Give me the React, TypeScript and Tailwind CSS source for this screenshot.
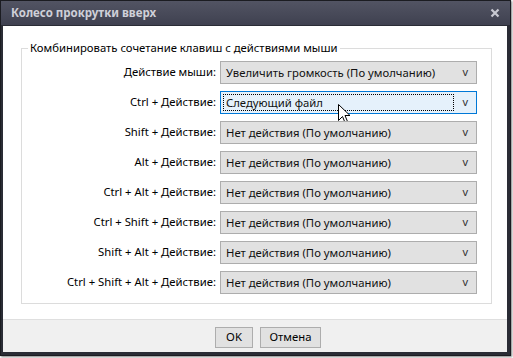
import React from 'react';

const rows = [
  { label: 'Действие мыши:', value: 'Увеличить громкость (По умолчанию)' },
  { label: 'Ctrl + Действие:', value: 'Следующий файл', focused: true },
  { label: 'Shift + Действие:', value: 'Нет действия (По умолчанию)' },
  { label: 'Alt + Действие:', value: 'Нет действия (По умолчанию)' },
  { label: 'Ctrl + Alt + Действие:', value: 'Нет действия (По умолчанию)' },
  { label: 'Ctrl + Shift + Действие:', value: 'Нет действия (По умолчанию)' },
  { label: 'Shift + Alt + Действие:', value: 'Нет действия (По умолчанию)' },
  { label: 'Ctrl + Shift + Alt + Действие:', value: 'Нет действия (По умолчанию)' },
];

function Cursor() {
  return (
    <svg className="absolute left-[117px] top-[12px]" width="13" height="20" viewBox="0 0 13 20">
      <path
        d="M0.5 0.5 L0.5 16.5 L4.5 12.5 L7 18.5 L9.5 17.5 L7 11.5 L12 11.5 Z"
        fill="#fff"
        stroke="#000"
        strokeWidth="1"
        strokeLinejoin="miter"
      />
    </svg>
  );
}

function Select({ value, focused }: { value: string; focused?: boolean }) {
  return (
    <div
      className={`relative flex items-center w-[257px] h-[23px] border ${
        focused ? 'border-[#0078d7] bg-[#e5f1fb]' : 'border-[#adadad] bg-[#e1e1e1]'
      }`}
    >
      <div
        className={`flex items-center h-[17px] ml-[2px] w-[231px] pl-[2px] ${
          focused ? 'border border-dotted border-black' : 'border border-transparent'
        }`}
      >
        <span className="leading-none">{value}</span>
      </div>
      <span className="ml-auto mr-[8px] text-[11px] text-[#333]">v</span>
      {focused && <Cursor />}
    </div>
  );
}

export default function App() {
  return (
    <div
      className="w-[513px] h-[358px] bg-white text-[11.3px] text-[#111]"
      style={{ fontFamily: '"Noto Sans", "Open Sans", sans-serif' }}
    >
      <div className="w-[511px] h-[356px] flex flex-col bg-[#2a2c35] border border-[#1b1c21] shadow-[1px_1px_2px_rgba(0,0,0,0.5)]">
        {/* Title bar */}
        <div className="h-[24px] flex items-center pl-[10px] pr-[10px] bg-gradient-to-b from-[#525463] to-[#3f4150]">
          <span className="font-bold text-[#cfd0d8] text-[11.5px]">Колесо прокрутки вверх</span>
          <svg className="ml-auto" width="10" height="10" viewBox="0 0 10 10">
            <path d="M1.5 1.5 L8.5 8.5 M8.5 1.5 L1.5 8.5" stroke="#c8c9d2" strokeWidth="2.2" />
          </svg>
        </div>

        {/* Body */}
        <div className="flex-1 flex flex-col ml-[2px] mr-[3px] mb-[3px] mt-[1px] bg-white">
          <div className="flex-1 pl-[18px] pr-[15px] pt-[14px]">
            <fieldset className="border border-[#dcdcdc] h-[264px] pt-[4px]">
              <legend className="ml-[6px] px-[2px] text-black">
                Комбинировать сочетание клавиш с действиями мыши
              </legend>
              <div className="flex flex-col gap-[7px]">
                {rows.map((r) => (
                  <div key={r.label} className="flex items-center">
                    <span className="w-[195px] text-right pr-[1px] text-black">{r.label}</span>
                    <div className="ml-[3px]">
                      <Select value={r.value} focused={r.focused} />
                    </div>
                  </div>
                ))}
              </div>
            </fieldset>
          </div>

          {/* Footer */}
          <div className="h-[33px] bg-[#f0f0f0] border-t border-[#dfdfdf] flex items-start pt-[7px] pl-[212px] gap-[7px]">
            <button className="w-[38px] h-[21px] bg-[#e1e1e1] border border-[#adadad] text-black">OK</button>
            <button className="w-[61px] h-[21px] bg-[#e1e1e1] border border-[#adadad] text-black">Отмена</button>
          </div>
        </div>
      </div>
    </div>
  );
}
